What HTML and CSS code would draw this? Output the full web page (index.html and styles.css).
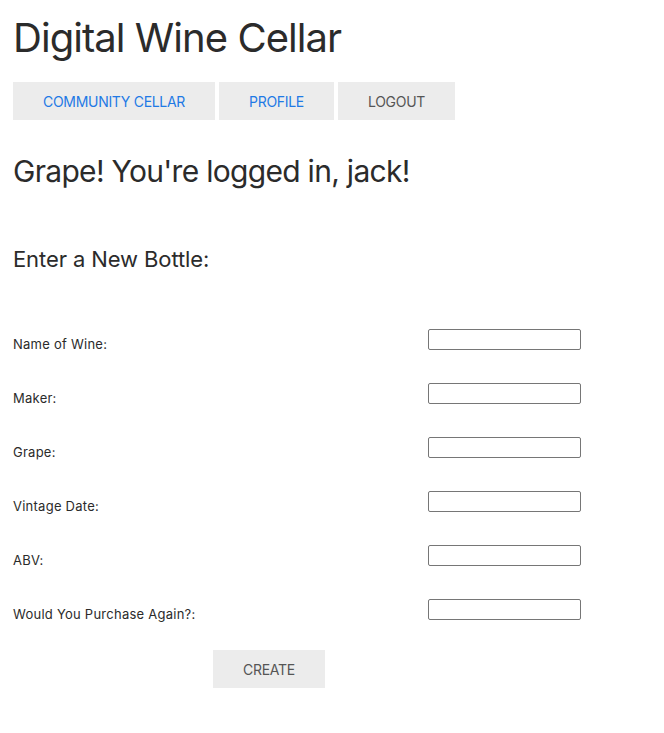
FILE: index.html
```html
<!DOCTYPE html>
<html lang="en">
<head>
<meta charset="utf-8">
<title>Digital Wine Cellar</title>
<link rel="stylesheet" href="styles.css">
</head>
<body>
<div class="page">
  <h1 class="title">Digital Wine Cellar</h1>
  <nav class="nav">
    <a class="btn link" href="#">Community Cellar</a>
    <a class="btn link" href="#">Profile</a>
    <button class="btn" type="button">Logout</button>
  </nav>
  <h2 class="greeting">Grape! You're logged in, jack!</h2>
  <h3 class="subtitle">Enter a New Bottle:</h3>
  <form class="form">
    <div class="row"><label class="label">Name of Wine:</label><input class="field" type="text"></div>
    <div class="row"><label class="label">Maker:</label><input class="field" type="text"></div>
    <div class="row"><label class="label">Grape:</label><input class="field" type="text"></div>
    <div class="row"><label class="label">Vintage Date:</label><input class="field" type="text"></div>
    <div class="row"><label class="label">ABV:</label><input class="field" type="text"></div>
    <div class="row"><label class="label">Would You Purchase Again?:</label><input class="field" type="text"></div>
    <button class="btn create" type="button">Create</button>
  </form>
</div>
</body>
</html>
```
FILE: styles.css
```css
html, body {
  margin: 0;
  padding: 0;
  background: #ffffff;
}
body {
  font-family: Inter, "Noto Sans", "Liberation Sans", sans-serif;
  color: #2b2b2b;
}
.page {
  padding: 0 13px;
}
.title {
  margin: 14px 0 20px;
  font-size: 40px;
  line-height: 48px;
  font-weight: 400;
  letter-spacing: -0.95px;
}
.nav {
  display: flex;
  gap: 4px;
}
.btn {
  display: inline-flex;
  align-items: center;
  justify-content: center;
  height: 38px;
  padding: 0 30px;
  border: 0;
  border-radius: 0;
  background: #ececec;
  color: #555555;
  font-family: inherit;
  font-size: 14px;
  letter-spacing: -0.3px;
  text-transform: uppercase;
  text-decoration: none;
  box-sizing: border-box;
}
.link {
  color: #1f7ae5;
}
.greeting {
  margin: 33px 0 0;
  font-size: 30px;
  line-height: 36px;
  font-weight: 400;
  letter-spacing: -0.7px;
}
.subtitle {
  margin: 57px 0 0;
  font-size: 22px;
  line-height: 26px;
  font-weight: 400;
  letter-spacing: -0.1px;
}
.form {
  margin-top: 57px;
}
.row {
  display: flex;
  height: 21px;
  margin-bottom: 33px;
}
.label {
  width: 415px;
  padding-top: 7px;
  font-size: 13px;
  line-height: 16px;
  letter-spacing: 0.25px;
}
.field {
  width: 153px;
  height: 21px;
  margin: 0;
  padding: 0 4px;
  border: 1px solid #767676;
  border-radius: 2px;
  box-sizing: border-box;
  font-family: inherit;
  font-size: 13px;
}
.create {
  margin: -3px 0 0 200px;
}
```
